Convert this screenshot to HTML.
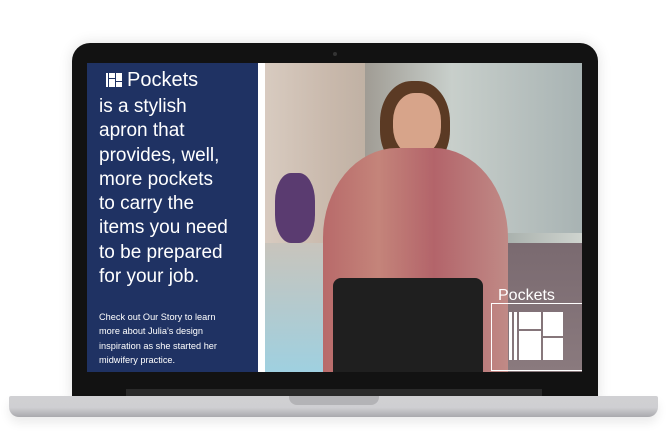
<!DOCTYPE html>
<html><head><style>
body{margin:0;width:668px;height:448px;background:#fff;position:relative;overflow:hidden;font-family:"Liberation Sans",sans-serif}
.bez{position:absolute;left:72px;top:43px;width:526px;height:358px;background:#121212;border-radius:18px 18px 0 0;box-shadow:0 0 14px rgba(0,0,0,.12)}
.scr{position:absolute;left:87px;top:63px;width:495px;height:309px;overflow:hidden;background:#8a7f76}
.blue{position:absolute;left:0;top:0;width:171px;height:309px;background:#1f3263;color:#fff}
.white{position:absolute;left:171px;top:0;width:7px;height:309px;background:#fff}
.photo{position:absolute;left:178px;top:0;width:317px;height:309px;background:linear-gradient(90deg,#d8cbc0 0,#c9b9ac 20%,#b2a597 50%,#9fa8a4 70%,#cfd4cf 100%)}
.base{position:absolute;left:9px;top:396px;width:649px;height:21px;background:linear-gradient(#d0d0d3 0,#cfcfd2 55%,#a9a9ad 100%);border-radius:2px 2px 10px 10px;box-shadow:0 6px 10px rgba(0,0,0,.08)}
.notch{position:absolute;left:289px;top:396px;width:90px;height:9px;background:#b3b3b6;border-radius:0 0 8px 8px}
.hinge{position:absolute;left:126px;top:389px;width:416px;height:7px;background:#2a2a2a}
</style></head><body>
<div class="bez"></div>
<div style="position:absolute;left:333px;top:52px;width:4px;height:4px;border-radius:2px;background:#333"></div>
<div class="hinge"></div>
<div class="scr">
 <div class="blue">
  <div style="position:absolute;left:18px;top:7px;font-size:20px;line-height:20px;display:flex;align-items:center">
   <svg width="20" height="16" viewBox="0 0 20 16" style="margin-right:2px"><rect x="1" y="1" width="2" height="14" fill="#fff"/><rect x="4" y="1" width="6" height="5" fill="#fff"/><rect x="11" y="1" width="6" height="8" fill="#fff"/><rect x="4" y="7" width="6" height="8" fill="#fff"/><rect x="11" y="10" width="6" height="5" fill="#fff"/></svg>Pockets</div>
  <div style="position:absolute;left:12px;top:32px;font-size:19px;line-height:24.3px;white-space:nowrap">is a stylish<br>apron that<br>provides, well,<br>more pockets<br>to carry the<br>items you need<br>to be prepared<br>for your job.</div>
  <div style="position:absolute;left:12px;top:247px;font-size:9.2px;line-height:14.3px;white-space:nowrap">Check out Our Story to learn<br>more about Julia’s design<br>inspiration as she started her<br>midwifery practice.</div>
 </div>
 <div class="white"></div>
 <div class="photo">
  <div style="position:absolute;left:100px;top:0;width:217px;height:170px;background:linear-gradient(90deg,#a09c94,#c8cfcb 40%,#a8b3b3 100%)"></div>
  <div style="position:absolute;left:195px;top:180px;width:122px;height:129px;background:linear-gradient(#7a6a70,#8a7a7e)"></div>
  <div style="position:absolute;left:0;top:180px;width:60px;height:129px;background:linear-gradient(#c8c4bc,#9fd0e0)"></div>
  <div style="position:absolute;left:10px;top:110px;width:40px;height:70px;background:#5a3b70;border-radius:40%"></div>
  <div style="position:absolute;left:115px;top:18px;width:70px;height:90px;background:#5b3a24;border-radius:45%"></div>
  <div style="position:absolute;left:128px;top:30px;width:48px;height:62px;background:#d7a48a;border-radius:45%"></div>
  <div style="position:absolute;left:58px;top:85px;width:185px;height:224px;background:linear-gradient(90deg,#b86a6a,#c4847a 30%,#b3646a 60%,#c08a86);border-radius:40% 40% 0 0"></div>
  <div style="position:absolute;left:68px;top:215px;width:150px;height:94px;background:#1f1f1f;border-radius:8px 8px 0 0"></div>
  <div style="position:absolute;left:226px;top:240px;width:90px;height:66px;border:1px solid #fff"></div>
  <div style="position:absolute;left:233px;top:224px;color:#fff;font-size:16px">Pockets</div>
  <svg style="position:absolute;left:240px;top:247px" width="60" height="52" viewBox="0 0 60 52"><rect x="4" y="2" width="3" height="48" fill="#fff"/><rect x="9" y="2" width="3" height="48" fill="#fff"/><rect x="14" y="2" width="22" height="17" fill="#fff"/><rect x="38" y="2" width="20" height="24" fill="#fff"/><rect x="14" y="21" width="22" height="29" fill="#fff"/><rect x="38" y="28" width="20" height="22" fill="#fff"/></svg>
 </div>
</div>
<div class="base"></div>
<div class="notch"></div>
</body></html>
